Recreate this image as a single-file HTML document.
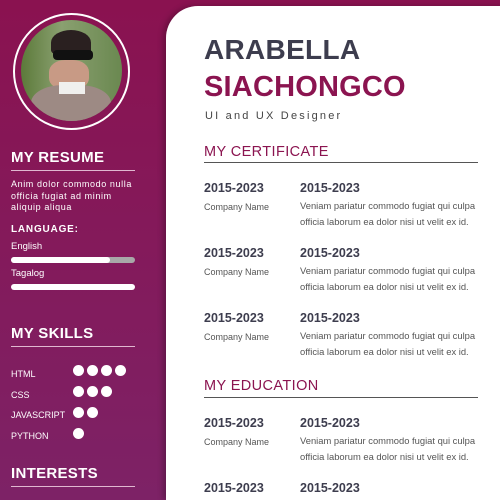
<!DOCTYPE html>
<html><head><style>
*{margin:0;padding:0;box-sizing:border-box}
html,body{width:500px;height:500px;overflow:hidden}
body{background:linear-gradient(180deg,#8a1250 0%,#7d2266 100%);font-family:"Liberation Sans",sans-serif;position:relative}
.a{position:absolute;white-space:nowrap}
.w{color:#fff}
.side h2{position:absolute;left:11px;font-size:15px;font-weight:bold;color:#fff;letter-spacing:0.3px}
.ln{position:absolute;left:11px;width:124px;height:1px;background:#e0b8d0}
.bar{position:absolute;left:11px;width:124px;height:6px;border-radius:3px;background:#fff}
.dot{position:absolute;width:11px;height:11px;border-radius:50%;background:#fff}
.sk{position:absolute;left:11px;font-size:9px;color:#fff}
.panel{position:absolute;left:166px;top:6px;width:340px;height:494px;background:#fff;border-top-left-radius:32px;box-shadow:-3px 0 6px rgba(0,0,0,.25)}
.h{position:absolute;left:204px;font-size:14.5px;color:#8b1450;letter-spacing:0.4px}
.hl{position:absolute;left:204px;width:274px;height:1px;background:#555}
.y{position:absolute;font-size:12.5px;font-weight:bold;color:#3d3d4e}
.c{position:absolute;left:204px;font-size:9px;color:#555}
.d{position:absolute;left:300px;font-size:9.4px;color:#555;line-height:16px}
</style></head><body>
<div class="side">
<div class="a" style="left:13px;top:13px;width:117px;height:117px;border:2px solid #fff;border-radius:50%"></div>
<div class="a" style="left:21px;top:20px;width:101px;height:101px;border-radius:50%;overflow:hidden;background:linear-gradient(90deg,#5c7a3a,#8aa070 40%,#6a8850)">
 <div class="a" style="left:28px;top:40px;width:40px;height:30px;border-radius:40%;background:#c89a85"></div>
 <div class="a" style="left:30px;top:10px;width:40px;height:25px;border-radius:50% 50% 20% 20%;background:#2a2020"></div>
 <div class="a" style="left:32px;top:30px;width:40px;height:10px;border-radius:4px;background:#111"></div>
 <div class="a" style="left:10px;top:65px;width:80px;height:45px;border-radius:40% 40% 0 0;background:#9d8a84"></div>
 <div class="a" style="left:38px;top:62px;width:26px;height:12px;background:#f0f0ee"></div>
</div>
<h2 style="top:149px">MY RESUME</h2>
<div class="ln" style="top:170px"></div>
<div class="a w" style="left:11px;top:179px;font-size:9px;line-height:11.7px;letter-spacing:0.6px">Anim dolor commodo nulla<br>officia fugiat ad minim<br>aliquip aliqua</div>
<div class="a w" style="left:11px;top:224px;font-size:10px;font-weight:bold;letter-spacing:0.8px">LANGUAGE:</div>
<div class="a w" style="left:11px;top:241px;font-size:9.5px">English</div>
<div class="bar" style="top:257px;background:#a8a8a8"><div style="width:99px;height:6px;border-radius:3px;background:#fff"></div></div>
<div class="a w" style="left:11px;top:268px;font-size:9.5px">Tagalog</div>
<div class="bar" style="top:284px"></div>
<h2 style="top:325px">MY SKILLS</h2>
<div class="ln" style="top:346px"></div>
<div class="sk" style="top:369px">HTML</div>
<div class="dot" style="left:73px;top:365px"></div><div class="dot" style="left:87px;top:365px"></div><div class="dot" style="left:101px;top:365px"></div><div class="dot" style="left:115px;top:365px"></div>
<div class="sk" style="top:390px">CSS</div>
<div class="dot" style="left:73px;top:386px"></div><div class="dot" style="left:87px;top:386px"></div><div class="dot" style="left:101px;top:386px"></div>
<div class="sk" style="top:410px">JAVASCRIPT</div>
<div class="dot" style="left:73px;top:407px"></div><div class="dot" style="left:87px;top:407px"></div>
<div class="sk" style="top:431px">PYTHON</div>
<div class="dot" style="left:73px;top:428px"></div>
<h2 style="top:465px">INTERESTS</h2>
<div class="ln" style="top:486px"></div>
</div>
<div class="panel"></div>
<div class="a" style="left:204px;top:34px;font-size:28px;font-weight:bold;color:#3d3d4e;letter-spacing:0.3px">ARABELLA</div>
<div class="a" style="left:204px;top:71px;font-size:29px;font-weight:bold;color:#8b1450;letter-spacing:0.2px">SIACHONGCO</div>
<div class="a" style="left:205px;top:110px;font-size:11px;color:#444;letter-spacing:2.2px">UI and UX Designer</div>
<div class="h" style="top:144px">MY CERTIFICATE</div>
<div class="hl" style="top:162px"></div>
<div class="y" style="left:204px;top:181px">2015-2023</div><div class="y" style="left:300px;top:181px">2015-2023</div>
<div class="c" style="top:202px">Company Name</div><div class="d" style="top:198px">Veniam pariatur commodo fugiat qui culpa<br>officia laborum ea dolor nisi ut velit ex id.</div>
<div class="y" style="left:204px;top:246px">2015-2023</div><div class="y" style="left:300px;top:246px">2015-2023</div>
<div class="c" style="top:267px">Company Name</div><div class="d" style="top:263px">Veniam pariatur commodo fugiat qui culpa<br>officia laborum ea dolor nisi ut velit ex id.</div>
<div class="y" style="left:204px;top:311px">2015-2023</div><div class="y" style="left:300px;top:311px">2015-2023</div>
<div class="c" style="top:332px">Company Name</div><div class="d" style="top:328px">Veniam pariatur commodo fugiat qui culpa<br>officia laborum ea dolor nisi ut velit ex id.</div>
<div class="h" style="top:378px">MY EDUCATION</div>
<div class="hl" style="top:397px"></div>
<div class="y" style="left:204px;top:416px">2015-2023</div><div class="y" style="left:300px;top:416px">2015-2023</div>
<div class="c" style="top:437px">Company Name</div><div class="d" style="top:433px">Veniam pariatur commodo fugiat qui culpa<br>officia laborum ea dolor nisi ut velit ex id.</div>
<div class="y" style="left:204px;top:481px">2015-2023</div><div class="y" style="left:300px;top:481px">2015-2023</div>
</body></html>
